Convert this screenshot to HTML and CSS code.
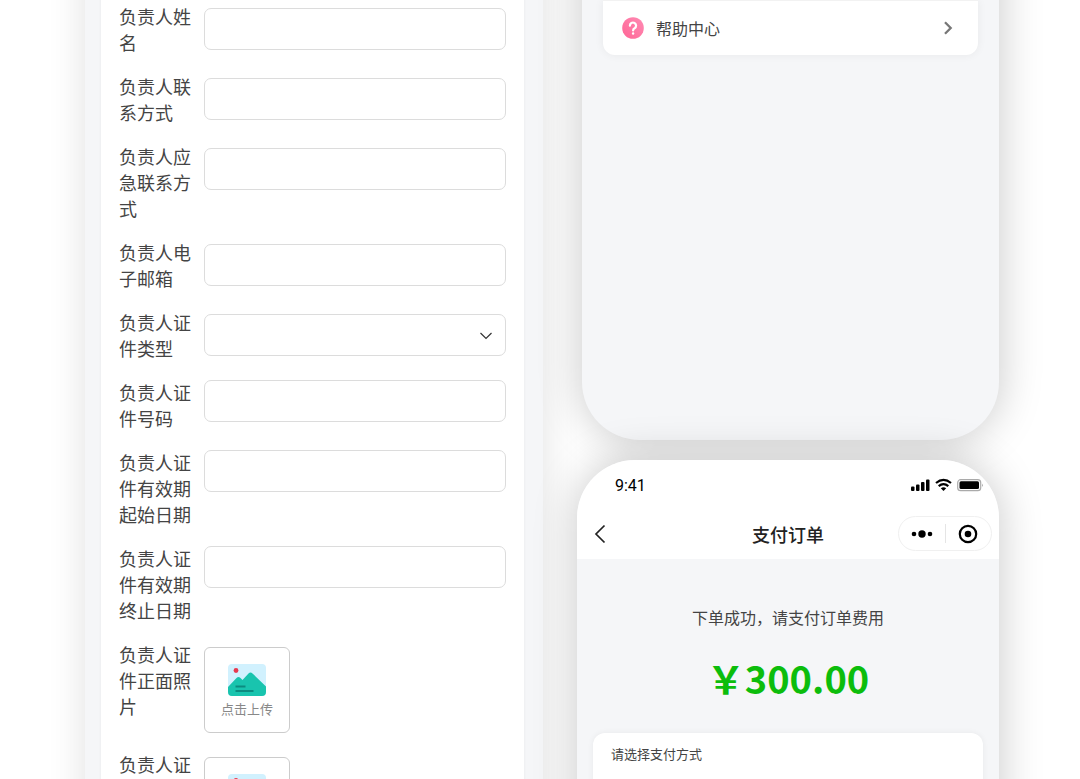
FILE: index.html
```html
<!DOCTYPE html>
<html lang="zh-CN">
<head>
  <meta charset="UTF-8">
  <meta name="viewport" content="width=device-width, initial-scale=1.0">
  <title>支付订单</title>
  <link rel="stylesheet" href="styles.css">
</head>
<body>
  <main class="board">
    <section class="screen form-screen">
      <form class="form-card">
        <div class="field">
          <label for="name">负责人姓名</label>
          <input type="text" id="name">
        </div>
        <div class="field">
          <label for="phone">负责人联系方式</label>
          <input type="text" id="phone">
        </div>
        <div class="field">
          <label for="emergency">负责人应急联系方式</label>
          <input type="text" id="emergency">
        </div>
        <div class="field">
          <label for="email">负责人电子邮箱</label>
          <input type="text" id="email">
        </div>
        <div class="field">
          <label for="id-type">负责人证件类型</label>
          <div class="select-wrap">
            <select id="id-type">
              <option value=""></option>
            </select>
            <svg class="select-arrow" width="12" height="8" viewBox="0 0 12 8" fill="none" stroke="#333" stroke-width="1.200" aria-hidden="true"><path d="M.5 1l5.500 5.500L11.500 1"/></svg>
          </div>
        </div>
        <div class="field field-top">
          <label for="id-number">负责人证件号码</label>
          <input type="text" id="id-number">
        </div>
        <div class="field field-top">
          <label for="valid-from">负责人证件有效期起始日期</label>
          <input type="text" id="valid-from">
        </div>
        <div class="field field-top">
          <label for="valid-to">负责人证件有效期终止日期</label>
          <input type="text" id="valid-to">
        </div>
        <div class="field">
          <label for="id-front">负责人证件正面照片</label>
          <button type="button" class="upload" id="id-front">
            <svg width="38" height="32" viewBox="0 0 38 32" aria-hidden="true">
              <rect width="38" height="32" rx="4" fill="#d1f1fe"/>
              <circle cx="8" cy="6.500" r="2.400" fill="#e8394f"/>
              <path d="M0 23L8.500 14q2-2 4 0l2 2L20.500 9.500q2-2 4 0L38 22.500V28q0 4-4 4H4q-4 0-4-4z" fill="#19c4ae"/>
              <path d="M7.500 22.500h10M7.500 27h18" stroke="#0c8b80" stroke-width="1.800"/>
            </svg>
            <span>点击上传</span>
          </button>
        </div>
        <div class="field">
          <label for="id-back">负责人证件反面照片</label>
          <button type="button" class="upload" id="id-back">
            <svg width="38" height="32" viewBox="0 0 38 32" aria-hidden="true">
              <rect width="38" height="32" rx="4" fill="#d1f1fe"/>
              <circle cx="8" cy="6.500" r="2.400" fill="#e8394f"/>
              <path d="M0 23L8.500 14q2-2 4 0l2 2L20.500 9.500q2-2 4 0L38 22.500V28q0 4-4 4H4q-4 0-4-4z" fill="#19c4ae"/>
              <path d="M7.500 22.500h10M7.500 27h18" stroke="#0c8b80" stroke-width="1.800"/>
            </svg>
            <span>点击上传</span>
          </button>
        </div>
      </form>
    </section>

    <div class="phones">
      <section class="screen mine-screen">
        <nav class="menu">
          <a href="#help" class="menu-item">
            <svg width="22" height="22" viewBox="0 0 22 22" aria-hidden="true">
              <defs>
                <linearGradient id="pink" x1="1" y1="0" x2="0" y2="1">
                  <stop offset="0" stop-color="#ff8bb4"/>
                  <stop offset="1" stop-color="#ff6595"/>
                </linearGradient>
              </defs>
              <circle cx="11" cy="11" r="10.800" fill="url(#pink)"/>
              <path d="M7.900 8.700a3.100 3.100 0 1 1 4.700 2.600q-1.500.8-1.500 2.200" fill="none" stroke="#fff" stroke-width="2.200" stroke-linecap="round"/>
              <circle cx="11.100" cy="16.500" r="1.200" fill="#fff"/>
            </svg>
            <span>帮助中心</span>
            <svg class="menu-arrow" width="10" height="14" viewBox="0 0 10 14" fill="none" stroke="#777" stroke-width="2.300" aria-hidden="true"><path d="M2 1.300L7.700 7 2 12.700"/></svg>
          </a>
        </nav>
      </section>

      <section class="screen pay-screen">
        <header class="pay-header">
          <div class="status-bar">
            <span>9:41</span>
            <svg width="73" height="14" viewBox="0 0 73 14" aria-hidden="true">
              <rect x="0" y="8.500" width="3.500" height="4.500" rx="1"/>
              <rect x="5" y="6.500" width="3.500" height="6.500" rx="1"/>
              <rect x="10" y="4" width="3.500" height="9" rx="1"/>
              <rect x="15" y="1.500" width="3.500" height="11.500" rx="1"/>
              <g fill="none" stroke="#000" stroke-width="2.200">
                <path d="M25 5q7.500-6.200 15 0"/>
                <path d="M27.700 8.200q4.800-4 9.600 0"/>
              </g>
              <path d="M29.800 10.200q2.700-2 5.400 0L32.500 13z"/>
              <rect x="46.700" y="1.700" width="23" height="11" rx="3" fill="none" stroke="#aaa" stroke-width="1.200"/>
              <rect x="48.500" y="3.300" width="19.500" height="7.800" rx="1.500"/>
              <path d="M71 5.500q1.500 1.700 0 3.400z" fill="#888"/>
            </svg>
          </div>
          <div class="nav-bar">
            <button type="button" class="back" aria-label="返回">
              <svg width="12" height="20" viewBox="0 0 12 20" fill="none" stroke="#222" stroke-width="1.700"><path d="M10.500 1.500L2 10l8.500 8.500"/></svg>
            </button>
            <h1>支付订单</h1>
            <div class="capsule">
              <button type="button" aria-label="更多">
                <svg width="22" height="20" viewBox="0 0 22 20"><circle cx="3" cy="10" r="2.300"/><circle cx="11" cy="10" r="3.700"/><circle cx="19" cy="10" r="2.300"/></svg>
              </button>
              <button type="button" aria-label="关闭">
                <svg width="20" height="20" viewBox="0 0 20 20"><circle cx="10" cy="10" r="8.200" fill="none" stroke="#000" stroke-width="2.200"/><circle cx="10" cy="10" r="3.300"/></svg>
              </button>
            </div>
          </div>
        </header>
        <p class="pay-tip">下单成功，请支付订单费用</p>
        <p class="pay-amount">￥300.00</p>
        <div class="pay-methods">
          <h2>请选择支付方式</h2>
        </div>
      </section>
    </div>
  </main>
</body>
</html>
```

FILE: styles.css
```css
* {
  box-sizing: border-box;
}
body {
  margin: 0;
  height: 100vh;
  overflow: hidden;
  background-color: #fff;
  color: #444;
  font-family: "Noto Sans CJK SC", sans-serif;
}
button {
  font-family: inherit;
  cursor: pointer;
}

/* the screens start above the top edge of the window */
.board {
  display: grid;
  grid-template-columns: 458fr 422fr;
  column-gap: 34px;
  margin-top: -80px;
  padding: 0 81px 0 85px;
}
.screen {
  background-color: #f5f6f8;
}

/* form */
.form-screen {
  padding: 0 19px 0 16px;
  box-shadow: 0 0 36px rgba(0, 0, 0, 0.12);
}
.form-card {
  display: flex;
  flex-direction: column;
  gap: 18px;
  padding: 83px 18px 60px;
  background-color: #fff;
  box-shadow: 0 0 3px rgba(0, 0, 0, 0.06);
}
.field {
  display: grid;
  grid-template-columns: 72px 1fr;
  column-gap: 13px;
  align-items: start;
}
.field label {
  font-size: 18px;
  line-height: 26px;
}
.field input,
.field select {
  width: 100%;
  height: 42px;
  margin: 5px 0 0;
  padding: 0 12px;
  border: 1px solid #dcdcdc;
  border-radius: 7px;
  background-color: #fff;
  font-family: inherit;
  font-size: 16px;
}
.field select {
  display: block;
  appearance: none;
}
.field-top input {
  margin-top: 1px;
}
.select-wrap {
  position: relative;
}
.select-arrow {
  position: absolute;
  right: 14px;
  bottom: 16px;
  pointer-events: none;
}
.upload {
  display: flex;
  flex-direction: column;
  align-items: center;
  width: 86px;
  height: 86px;
  margin: 6px 0 0;
  padding: 16px 0 0;
  border: 1px solid #ccc;
  border-radius: 6px;
  background-color: #fff;
  color: #888;
  font-size: 13px;
  line-height: 20px;
}
.upload span {
  margin-top: 3px;
}

/* phones */
.phones {
  display: flex;
  flex-direction: column;
  gap: 20px;
}
.mine-screen {
  margin-left: 5px;
  padding: 80px 21px 385px;
  border-radius: 0 0 58px 58px;
  box-shadow: 0 0 44px rgba(0, 0, 0, 0.22);
}
.menu {
  border-radius: 0 0 12px 12px;
  background-color: #fff;
  box-shadow: 0 0 10px rgba(0, 0, 0, 0.06);
}
.menu-item {
  display: flex;
  align-items: center;
  gap: 12px;
  height: 55px;
  padding: 0 25px 0 19px;
  border-top: 1px solid #f2f2f2;
  color: #444;
  font-size: 16px;
  text-decoration: none;
}
.menu-arrow {
  margin-left: auto;
}
.pay-screen {
  border-radius: 58px 58px 0 0;
  box-shadow: 0 0 44px rgba(0, 0, 0, 0.22);
}
.pay-header {
  padding-top: 13px;
  border-radius: 58px 58px 0 0;
  background-color: #fff;
}
.status-bar {
  display: flex;
  align-items: center;
  justify-content: space-between;
  height: 24px;
  padding: 0 15px 0 38px;
  color: #000;
  font-family: Roboto, sans-serif;
  font-size: 16px;
}
.nav-bar {
  display: grid;
  grid-template-columns: 1fr auto 1fr;
  align-items: center;
  margin-top: 19px;
  padding: 0 7px 8px;
}
.nav-bar h1 {
  margin: 0;
  color: #222;
  font-size: 18px;
  font-weight: 500;
}
.back {
  display: flex;
  justify-self: start;
  padding: 0 10px;
  border: none;
  background: none;
}
.capsule {
  display: flex;
  justify-self: end;
  width: 94px;
  height: 35px;
  padding: 7px 0;
  border: 1px solid #f0f0f0;
  border-radius: 18px;
}
.capsule button {
  display: flex;
  flex: 1;
  align-items: center;
  justify-content: center;
  padding: 0;
  border: none;
  background: none;
}
.capsule button + button {
  border-left: 1px solid #e5e5e5;
}
.pay-tip {
  margin: 46px 0 0;
  font-size: 16px;
  line-height: 24px;
  text-align: center;
}
.pay-amount {
  margin: 20px 0 0;
  color: #0cbd0c;
  font-size: 38px;
  font-weight: 700;
  line-height: 58px;
  text-align: center;
}
.pay-methods {
  margin: 26px 16px 0;
  padding: 11px 18px 61px;
  border-radius: 12px;
  background-color: #fff;
  box-shadow: 0 0 6px rgba(0, 0, 0, 0.06);
}
.pay-methods h2 {
  margin: 0;
  font-size: 13px;
  font-weight: 400;
  line-height: 20px;
}
```
